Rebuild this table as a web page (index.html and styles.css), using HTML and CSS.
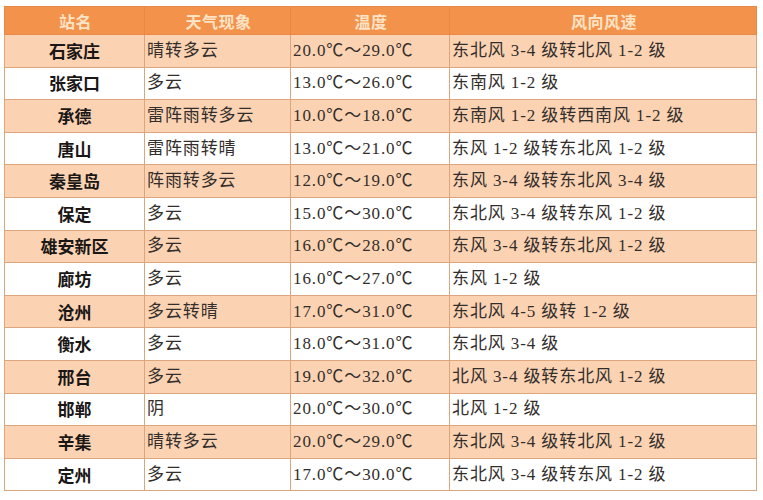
FILE: index.html
```html
<!DOCTYPE html>
<html lang="zh-CN">
<head>
<meta charset="utf-8">
<title>天气预报</title>
<link rel="stylesheet" href="styles.css">
</head>
<body>
<table class="weather">
  <colgroup>
    <col class="c-name">
    <col class="c-wx">
    <col class="c-temp">
    <col class="c-wind">
  </colgroup>
  <thead>
    <tr class="head"><th>站名</th><th>天气现象</th><th>温度</th><th>风向风速</th></tr>
  </thead>
  <tbody>
    <tr class="odd"><td class="name">石家庄</td><td>晴转多云</td><td>20.0℃～29.0℃</td><td>东北风 3-4 级转北风 1-2 级</td></tr>
    <tr><td class="name">张家口</td><td>多云</td><td>13.0℃～26.0℃</td><td>东南风 1-2 级</td></tr>
    <tr class="odd"><td class="name">承德</td><td>雷阵雨转多云</td><td>10.0℃～18.0℃</td><td>东南风 1-2 级转西南风 1-2 级</td></tr>
    <tr><td class="name">唐山</td><td>雷阵雨转晴</td><td>13.0℃～21.0℃</td><td>东风 1-2 级转东北风 1-2 级</td></tr>
    <tr class="odd"><td class="name">秦皇岛</td><td>阵雨转多云</td><td>12.0℃～19.0℃</td><td>东风 3-4 级转东北风 3-4 级</td></tr>
    <tr><td class="name">保定</td><td>多云</td><td>15.0℃～30.0℃</td><td>东北风 3-4 级转东风 1-2 级</td></tr>
    <tr class="odd"><td class="name">雄安新区</td><td>多云</td><td>16.0℃～28.0℃</td><td>东风 3-4 级转东北风 1-2 级</td></tr>
    <tr><td class="name">廊坊</td><td>多云</td><td>16.0℃～27.0℃</td><td>东风 1-2 级</td></tr>
    <tr class="odd"><td class="name">沧州</td><td>多云转晴</td><td>17.0℃～31.0℃</td><td>东北风 4-5 级转 1-2 级</td></tr>
    <tr><td class="name">衡水</td><td>多云</td><td>18.0℃～31.0℃</td><td>东北风 3-4 级</td></tr>
    <tr class="odd"><td class="name">邢台</td><td>多云</td><td>19.0℃～32.0℃</td><td>北风 3-4 级转东北风 1-2 级</td></tr>
    <tr><td class="name">邯郸</td><td>阴</td><td>20.0℃～30.0℃</td><td>北风 1-2 级</td></tr>
    <tr class="odd"><td class="name">辛集</td><td>晴转多云</td><td>20.0℃～29.0℃</td><td>东北风 3-4 级转北风 1-2 级</td></tr>
    <tr><td class="name">定州</td><td>多云</td><td>17.0℃～30.0℃</td><td>东北风 3-4 级转东风 1-2 级</td></tr>
  </tbody>
</table>
</body>
</html>
```
FILE: styles.css
```css
html, body {
  margin: 0;
  padding: 0;
  background: #ffffff;
}
body {
  padding: 6px 0 0 4px;
}
.weather {
  width: 752px;
  border-collapse: collapse;
  table-layout: fixed;
  font-family: "Liberation Serif", "Noto Sans CJK SC", serif;
  font-size: 17px;
  color: #332e2b;
  letter-spacing: 0.9px;
}
.c-name { width: 140px; }
.c-wx { width: 146px; }
.c-temp { width: 159px; }
.c-wind { width: 307px; }
.weather th,
.weather td {
  border: 1px solid #dca57e;
  padding: 0 0 0 2px;
  white-space: nowrap;
  overflow: hidden;
  line-height: 20px;
}
.head th {
  height: 27px;
  background: #f3924a;
  color: #fde3c6;
  font-family: "Noto Sans CJK SC", sans-serif;
  font-weight: 700;
  font-size: 16px;
  text-align: center;
  letter-spacing: 0.5px;
  border-color: #e8894a;
}
.weather td {
  height: 31.6px;
  text-align: left;
}
.weather td.name {
  text-align: center;
  font-family: "Noto Sans CJK SC", sans-serif;
  font-weight: 700;
  color: #1a1716;
  letter-spacing: 0;
  padding: 0;
}
.odd td {
  background: #fbd3b3;
}
```
